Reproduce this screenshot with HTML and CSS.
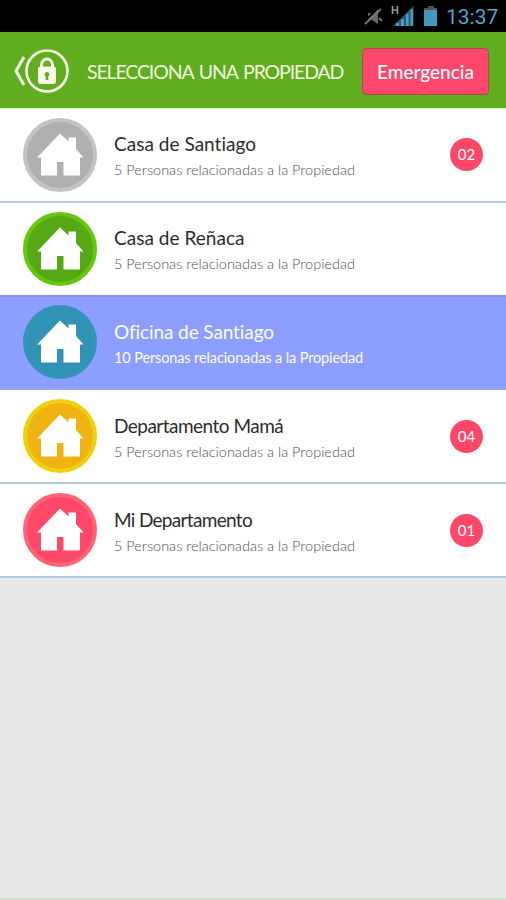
FILE: index.html
```html
<!DOCTYPE html>
<html lang="es">
<head>
<meta charset="utf-8">
<title>Selecciona una propiedad</title>
<link rel="stylesheet" href="styles.css">
</head>
<body>
<svg class="defs" width="0" height="0">
  <symbol id="house" viewBox="0 0 74 74">
    <path fill="#fff" d="M37 15.500 45.500 23.500V19.500H53V31L60.500 39.500H57v18H40.500V44h-6.500v13.500H18v-18h-4z"/>
  </symbol>
</svg>
<div class="screen">
  <div class="status">
    <svg class="status-icons" width="82" height="32" viewBox="0 0 82 32">
      <path fill="#68686c" d="M4 13h4l6-5v16l-6-4H4z"/>
      <path d="M0 22 15 7" fill="none" stroke="#000" stroke-width="2"/>
      <path d="M1 24 17 9M15 18l3 3" fill="none" stroke="#77777b" stroke-width="1.800"/>
      <path d="M28.500 6v8M33.500 6v8M28.500 10h5" fill="none" stroke="#96989a" stroke-width="1.600"/>
      <path d="M49.500 6v20H29z" fill="#285d74"/>
      <path d="M32 26v-3h3v3zM37 26v-7h3v7zM42 26V14h2.500v12zM46.500 26V9h2.500v17z" fill="#459dbd"/>
      <path d="M64 6h6v2h3v18H60V8h4z" fill="#4098bb"/>
      <path d="M64 6h6v2h3v2H60V8h4z" fill="#4d5558"/>
    </svg>
    <span class="clock">13:37</span>
  </div>
  <header class="header">
    <svg class="lock" width="56" height="46" viewBox="0 0 56 46">
      <g fill="none" stroke="#f8ffe9">
        <path d="M11 9 3 23 11 37" stroke-width="3"/>
        <circle cx="34" cy="23" r="20.500" stroke-width="2.600"/>
        <path d="M28.500 21v-4a5.500 6 0 0 1 11 0v4" stroke-width="3"/>
      </g>
      <rect x="25" y="18.500" width="18" height="17.500" rx="2.500" fill="#f8ffe9"/>
      <path d="M34 24a2.500 2.500 0 0 1 1.300 4.600V32h-2.600v-3.400A2.500 2.500 0 0 1 34 24z" fill="#60ad20"/>
    </svg>
    <h1 class="heading">SELECCIONA UNA PROPIEDAD</h1>
    <button class="emergency">Emergencia</button>
  </header>
  <main class="list">
    <div class="row">
      <div class="icon gray"><svg><use href="#house"/></svg></div>
      <div class="info"><div class="name">Casa de Santiago</div><div class="sub">5 Personas relacionadas a la Propiedad</div></div>
      <div class="badge">02</div>
    </div>
    <div class="row">
      <div class="icon green"><svg><use href="#house"/></svg></div>
      <div class="info"><div class="name">Casa de Reñaca</div><div class="sub">5 Personas relacionadas a la Propiedad</div></div>
    </div>
    <div class="row selected">
      <div class="icon blue"><svg><use href="#house"/></svg></div>
      <div class="info"><div class="name">Oficina de Santiago</div><div class="sub">10 Personas relacionadas a la Propiedad</div></div>
    </div>
    <div class="row">
      <div class="icon yellow"><svg><use href="#house"/></svg></div>
      <div class="info"><div class="name tight">Departamento Mamá</div><div class="sub">5 Personas relacionadas a la Propiedad</div></div>
      <div class="badge">04</div>
    </div>
    <div class="row">
      <div class="icon red"><svg><use href="#house"/></svg></div>
      <div class="info"><div class="name tighter">Mi Departamento</div><div class="sub">5 Personas relacionadas a la Propiedad</div></div>
      <div class="badge">01</div>
    </div>
  </main>
</div>
</body>
</html>
```
FILE: styles.css
```css
* { box-sizing: border-box; }
body { margin: 0; font-family: Lato, sans-serif; font-variant-ligatures: none; }
.defs { display: none; }
.screen { width: 506px; height: 900px; display: flex; flex-direction: column; background: #e9e9e9; border-bottom: 2px solid #d3ddc0; overflow: hidden; }
.status { height: 32px; flex: none; background: #000; display: flex; justify-content: flex-end; align-items: center; padding-right: 6px; }
.clock { font: 21px/32px Roboto, sans-serif; color: #4aa7cb; width: 54px; margin: 2px 0 0; white-space: nowrap; }
.status-icons { flex: none; }
.header { height: 76px; flex: none; background: #60ad20; display: flex; align-items: center; padding: 0 17px 0 13px; }
.lock { flex: none; margin-top: 2px; }
.heading { margin: 3px 0 0 18px; width: 275px; flex: none; font-size: 19.500px; line-height: 24px; font-weight: 400; color: #f0fadf; white-space: nowrap; letter-spacing: -1.120px; word-spacing: 2px; }
.emergency { width: 127px; height: 47px; flex: none; margin: 2px 0 0; padding: 0; border: 1px solid #a6513b; border-radius: 4px; background: #ff476b; color: #fff; font: 500 19px Lato, sans-serif; }
.list { flex: none; background: #fff; border-top: 1px solid #ddefcf; }
.row { height: 93.8px; display: flex; align-items: center; padding: 0 23px; background: #fff; border-bottom: 2px solid #b5c9dc; }
.row:nth-child(2) { border-bottom-color: #8194ed; }
.selected { background: #8c9eff; border-bottom-color: #93a6f2; }
.icon { width: 74px; height: 74px; flex: none; border-radius: 50%; border: 4px solid; }
.icon svg { display: block; width: 74px; height: 74px; margin: -4px; }
.gray { background: #b0b0b0; border-color: #c3c3c3; }
.green { background: #54a914; border-color: #65c80d; }
.blue { background: #3093b5; border-color: #3494b8; }
.yellow { background: #f0b412; border-color: #eed10c; }
.red { background: #ff4768; border-color: #ff6475; }
.info { flex: 1; margin-left: 17px; padding-top: 4px; white-space: nowrap; }
.name { font-size: 19px; line-height: 26px; color: #2c2c2c; letter-spacing: 0.030px; }
.tight { letter-spacing: -0.520px; }
.tighter { letter-spacing: -0.680px; }
.sub { font-size: 14.500px; line-height: 25px; color: #505050; font-weight: 300; }
.selected .name, .selected .sub { color: #fff; }
.selected .name { letter-spacing: -0.100px; }
.selected .sub { font-weight: 400; letter-spacing: -0.120px; }
.badge { width: 33px; height: 33px; flex: none; border-radius: 50%; background: #ff4768; color: #fff; font-size: 15px; line-height: 33px; text-align: center; }
```
